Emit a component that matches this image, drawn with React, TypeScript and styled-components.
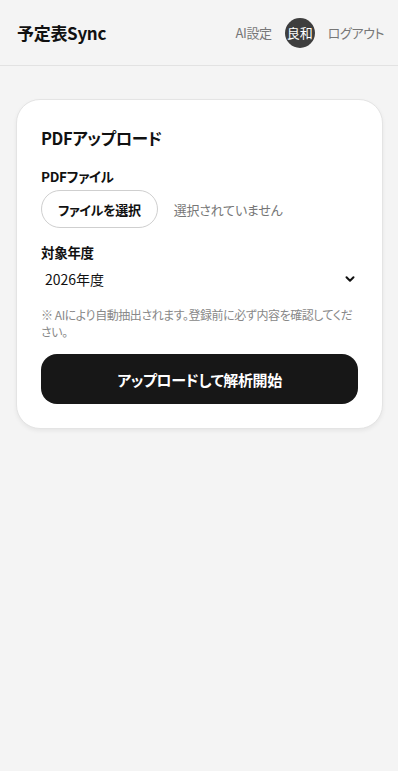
import styled, { createGlobalStyle } from "styled-components";

const GlobalStyle = createGlobalStyle`
  html, body {
    margin: 0;
    padding: 0;
    background: #f4f4f4;
    font-family: "Noto Sans CJK JP", "Noto Sans", sans-serif;
    font-feature-settings: "palt";
    color: #111;
  }
  * { box-sizing: border-box; }
  button { font-feature-settings: "palt"; }
`;

const App = () => {
  return (
    <Page>
      <GlobalStyle />
      <Header>
        <Logo>予定表Sync</Logo>
        <Nav>
          <NavLink>AI設定</NavLink>
          <Avatar>良和</Avatar>
          <NavLink>ログアウト</NavLink>
        </Nav>
      </Header>
      <Main>
        <Card>
          <CardTitle>PDFアップロード</CardTitle>
          <Field>
            <Label>PDFファイル</Label>
            <FileRow>
              <FileButton type="button">ファイルを選択</FileButton>
              <FileStatus>選択されていません</FileStatus>
            </FileRow>
          </Field>
          <Field>
            <Label>対象年度</Label>
            <SelectRow>
              <span>2026年度</span>
              <svg width="12" height="12" viewBox="0 0 12 12">
                <path d="M2.5 4.2 6 7.7 9.5 4.2" fill="none" stroke="#111" strokeWidth="2" strokeLinecap="round" strokeLinejoin="round" />
              </svg>
            </SelectRow>
          </Field>
          <Note>※ AIにより自動抽出されます。登録前に必ず内容を確認してください。</Note>
          <SubmitButton type="button">アップロードして解析開始</SubmitButton>
        </Card>
      </Main>
    </Page>
  );
};

const Page = styled.div`
  min-height: 771px;
  background: #f4f4f4;
`;

const Header = styled.header`
  height: 66px;
  display: flex;
  align-items: center;
  justify-content: space-between;
  padding: 0 14px 0 17px;
  border-bottom: 1px solid #e2e2e2;
`;

const Logo = styled.h1`
  margin: 0;
  font-size: 17px;
  font-weight: 700;
  letter-spacing: -0.3px;
`;

const Nav = styled.nav`
  display: flex;
  align-items: center;
  gap: 13px;
`;

const NavLink = styled.span`
  font-size: 13px;
  letter-spacing: -0.4px;
  color: #777;
`;

const Avatar = styled.div`
  width: 30px;
  height: 30px;
  border-radius: 50%;
  background: #3e3e3e;
  color: #fff;
  font-size: 13px;
  display: flex;
  align-items: center;
  justify-content: center;
`;

const Main = styled.main`
  padding: 33px 15px 0 16px;
`;

const Card = styled.section`
  background: #fff;
  border: 1px solid #e4e4e4;
  border-radius: 24px;
  box-shadow: 0 2px 4px rgba(0, 0, 0, 0.06);
  padding: 24px;
  display: flex;
  flex-direction: column;
`;

const CardTitle = styled.h2`
  margin: 0 0 14px;
  font-size: 16.5px;
  font-weight: 700;
  letter-spacing: -0.4px;
  line-height: 28px;
`;

const Field = styled.div`
  display: flex;
  flex-direction: column;
  gap: 4px;
  margin-bottom: 14px;
`;

const Label = styled.label`
  font-size: 13.5px;
  font-weight: 600;
  letter-spacing: -0.3px;
  line-height: 20px;
`;

const FileRow = styled.div`
  display: flex;
  align-items: center;
  gap: 16px;
`;

const FileButton = styled.button`
  height: 38px;
  padding: 0 16px;
  border: 1px solid #cfcfcf;
  border-radius: 19px;
  background: #fff;
  font-family: inherit;
  font-size: 13px;
  font-weight: 600;
  letter-spacing: -0.3px;
  color: #111;
`;

const FileStatus = styled.span`
  font-size: 13px;
  letter-spacing: -0.2px;
  color: #777;
`;

const SelectRow = styled.div`
  display: flex;
  align-items: center;
  justify-content: space-between;
  height: 26px;
  padding: 0 2px 0 4px;
  font-size: 14px;
`;

const Note = styled.p`
  margin: 0 0 14px;
  font-size: 12px;
  line-height: 17px;
  letter-spacing: -0.45px;
  color: #888;
`;

const SubmitButton = styled.button`
  height: 50px;
  border: none;
  border-radius: 16px;
  background: #171717;
  color: #fff;
  font-family: inherit;
  font-size: 15px;
  font-weight: 700;
  letter-spacing: -0.4px;
`;

export default App;
